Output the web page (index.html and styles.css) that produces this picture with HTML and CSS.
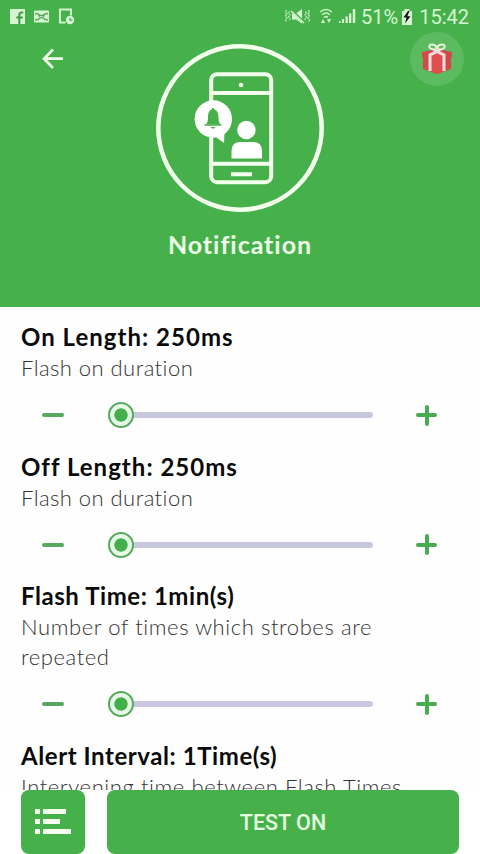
FILE: index.html
```html
<!DOCTYPE html>
<html lang="en">
<head>
<meta charset="utf-8">
<title>Notification</title>
<link rel="stylesheet" href="styles.css">
</head>
<body>
<div class="screen">
  <header class="hero">
    <div class="status">
      <svg class="status-left" width="70" height="20" viewBox="0 0 70 20">
        <path fill="#d5f5d1" d="M0 2h15v15H0z"/>
        <path d="M9.300 17V8q0-2.500 2.500-2.500h1.500M6.300 10.500h6.500" fill="none" stroke="#3f9a45" stroke-width="2"/>
        <rect x="24" y="3.500" width="15" height="12" rx="1" fill="#d5f5d1"/>
        <path d="M25 6.500l3 .3q3.500 3.600 7 0l3-.3M25 13l3-.5q3.500-3.800 7 0l3 .5M28 6.800l2 3M35 6.800l-2 3" fill="none" stroke="#56a658" stroke-width="1.300"/>
        <path d="M55.500 15.500H50V2.500h11v6" fill="none" stroke="#d5f5d1" stroke-width="2"/>
        <circle cx="60" cy="13" r="4.200" fill="#d5f5d1"/>
        <path d="M60 10.700v2.500h2.400" fill="none" stroke="#46b14b" stroke-width="1.200"/>
      </svg>
      <svg class="status-icons" width="72" height="20" viewBox="0 0 72 20">
        <g fill="none" stroke="#c0ebbc" stroke-width="1.300" stroke-dasharray="2 .8">
          <path d="M2.500 3l-1 2 1.500 2-1.500 2L3 11l-1.500 2 1 2M5.500 4.500l-1 1.500L6 8l-1.500 2L6 12l-1 1.500M24.500 3l1 2L24 7l1.500 2L24 11l1.500 2-1 2M21.500 4.500l1 1.500L21 8l1.500 2-1.500 2 1 1.500"/>
        </g>
        <path fill="none" stroke="#c9efc5" stroke-width="1.500" d="M36 5q6-5 12 0M38 7.800q4-3.500 8 0M40 10.500q2-1.700 4 0"/>
        <path fill="#d5f5d1" d="M8 6.500h4l6-4.500v14.500l-6-4H8zM41 16h-4l2-4zM43 12h4l-2 4zM58 12h2v4h-2zM61.500 9.500h2.300V16h-2.300zM65 6.500h2.300V16H65zM68.800 2h2.400v14h-2.400zM55 14h1.500v2H55z"/>
        <path d="M7 3l13 12" stroke="#46b14b" stroke-width="2.400"/><path d="M7 4l13 12" stroke="#d5f5d1" stroke-width="1.300"/>
      </svg>
      <span class="percent">51%</span>
      <svg class="battery" width="12" height="18" viewBox="0 0 12 18">
        <path d="M1 3h2.500V1h5v2H11v14H1z" fill="#d5f5d1"/>
        <path d="M7 3L2.500 9.500h3L4 15.500l5.500-7.300H6.300L8.500 3z" fill="#111"/>
      </svg>
      <span class="clock">15:42</span>
    </div>
    <svg class="back" width="22" height="22" viewBox="0 0 22 22"><path d="M11 1.500L2 10.700l9 9.300M2.500 10.700H21" fill="none" stroke="#effbe9" stroke-width="2.700"/></svg>
    <svg class="gift" width="54" height="54" viewBox="0 0 54 54">
      <circle cx="27" cy="27" r="27" fill="#5cba61"/>
      <path d="M12 20l15-3 15 3v5l-1 1v11l-14 5-14-5V26l-1-1z" fill="#d2494b"/>
      <path d="M21 23l6-2 6 2v16l-6 3-6-3z" fill="#e04e50"/>
      <path d="M20 39V23l10-5M34 39V23l-10-5" fill="none" stroke="#f6dfda" stroke-width="3"/>
      <g fill="none" stroke="#e9f3dc" stroke-width="1.900"><ellipse cx="22.800" cy="15" rx="3.600" ry="2.300" transform="rotate(15 22.800 15)"/><ellipse cx="31.200" cy="15" rx="3.600" ry="2.300" transform="rotate(-15 31.200 15)"/></g>
    </svg>
    <svg class="emblem" width="168" height="168" viewBox="0 0 168 168">
      <g fill="none" stroke="#f3ffed" stroke-width="4">
        <circle cx="84" cy="84" r="81.700" stroke-width="4.500"/>
        <rect x="55.200" y="30.200" width="60" height="108" rx="6"/>
        <path d="M55 49h60M55 119.800h60M75 130.300h21"/>
      </g>
      <circle cx="85" cy="41" r="2.300" fill="#f3ffed"/>
      <circle cx="57.300" cy="75" r="18.700" fill="#fff"/>
      <path d="M57 91l11.500-3-.500 11z" fill="#fff"/>
      <path d="M50 80.500q2-2 2-7c0-5 1.500-7.500 4-8.200v-1.300h2v1.300c2.500.700 4.500 3.200 4.500 8.200q0 5 2 7zM54.500 83h5q-2.500 3.600-5 0" fill="#46b14b"/>
      <path d="M48.500 81h17" stroke="#46b14b" stroke-width="1.500"/>
      <circle cx="90.400" cy="86" r="9.200" fill="#fff"/>
      <path d="M75.500 114.500V107q0-9 9-9h12.500q9 0 9 9v7.500z" fill="#fff"/>
    </svg>
    <h1 class="title">Notification</h1>
  </header>

  <main class="settings">
    <section class="setting">
      <h2 class="name n1">On Length: 250ms</h2>
      <p class="desc">Flash on duration</p>
      <div class="control"><span class="minus"></span><div class="track"><span class="thumb"></span></div><span class="plus"></span></div>
    </section>
    <section class="setting">
      <h2 class="name n2">Off Length: 250ms</h2>
      <p class="desc">Flash on duration</p>
      <div class="control"><span class="minus"></span><div class="track"><span class="thumb"></span></div><span class="plus"></span></div>
    </section>
    <section class="setting">
      <h2 class="name n3">Flash Time: 1min(s)</h2>
      <p class="desc d3">Number of times which strobes are<br>repeated</p>
      <div class="control"><span class="minus"></span><div class="track"><span class="thumb"></span></div><span class="plus"></span></div>
    </section>
    <section class="setting">
      <h2 class="name n4">Alert Interval: 1Time(s)</h2>
      <p class="desc d4">Intervening time between Flash Times</p>
    </section>
  </main>

  <footer class="actions">
    <button class="list-button" aria-label="List">
      <svg width="36" height="26" viewBox="0 0 36 26" fill="#f4fff0"><path d="M0 0h5v5H0zM8 0h23v5H8zM0 10h5v5H0zM8 10h17v5H8zM0 20h5v5H0zM8 20h28v5H8z"/></svg>
    </button>
    <button class="test-button">TEST ON</button>
  </footer>
</div>
</body>
</html>
```
FILE: styles.css
```css
* { box-sizing: border-box; }
body { margin: 0; background: #fff; font-family: Lato, "Liberation Sans", sans-serif; font-variant-ligatures: none; }
h1, h2, p { margin: 0; }
svg { display: block; flex: none; }
.screen { width: 480px; height: 854px; display: flex; flex-direction: column; overflow: hidden; background: #fefefe; }
.hero {
  height: 307px; flex: none; background: #46b14b;
  display: grid; grid-template-columns: 156px 168px 156px;
  grid-template-rows: 32px 180px 95px;
}
.status {
  grid-column: 1 / 4; display: flex; align-items: center;
  padding: 2px 11px 0 10px; color: #d5f5d1;
  font: 20px/30px Roboto, sans-serif;
}
.status-icons { margin-left: auto; }
.percent { margin-left: 5px; }
.battery { margin-left: 3px; }
.clock { margin-left: 6px; }
.back { grid-column: 1; grid-row: 2; margin: 16px 0 0 42px; }
.emblem { grid-column: 2; grid-row: 2; margin-top: 12px; }
.gift { grid-column: 3; grid-row: 2; margin-left: 86px; }
.title {
  grid-column: 1 / 4; grid-row: 3; text-align: center; color: #edfde8;
  font-size: 25px; line-height: 30px; font-weight: 700; padding-top: 17px;
  letter-spacing: .95px; white-space: nowrap;
}
.settings { flex: 1; min-height: 0; overflow: hidden; padding: 15px 21px 0; }
.setting { margin-bottom: 5.5px; }
.name { font-size: 24px; line-height: 30px; padding-bottom: 1px; font-weight: 700; color: #0b0b0b; white-space: nowrap; }
.n1, .n2 { letter-spacing: 1.02px; }
.n3, .n4 { letter-spacing: .57px; }
.desc { font-size: 22px; line-height: 30px; padding-bottom: 1px; font-weight: 300; letter-spacing: .45px; color: #333; white-space: nowrap; }
.d3, .d4 { letter-spacing: .59px; }
.control { display: flex; align-items: center; height: 62px; padding: 0 21px; }
.minus { width: 22px; height: 4px; border-radius: 2px; background: #55a960; flex: none; }
.track { width: 264px; height: 6px; margin-left: 45px; border-radius: 3px; background: #c8c8df; display: flex; align-items: center; }
.thumb {
  flex: none; width: 26px; height: 26px; margin-left: -1px; border: 2.5px solid #55aa5c; border-radius: 50%;
  background: radial-gradient(circle, #43b04a 6.3px, #e5fae6 7px);
}
.plus { width: 21px; height: 22px; margin-left: 43px; flex: none; display: grid; place-items: center; }
.plus::before, .plus::after { content: ""; grid-area: 1 / 1; border-radius: 2px; background: #48ad50; }
.plus::before { width: 21px; height: 4px; }
.plus::after { width: 4px; height: 21px; }
.actions { height: 64px; flex: none; display: flex; gap: 22px; padding: 0 21px; background: #fff; }
.list-button, .test-button { border: 0; padding: 0; border-radius: 8px; background: #46b14b; }
.list-button { width: 64px; display: flex; align-items: center; justify-content: center; }
.test-button { flex: 1; color: #e5fce1; font: 500 21.5px/64px Roboto, sans-serif; padding-top: 1px; }
```
